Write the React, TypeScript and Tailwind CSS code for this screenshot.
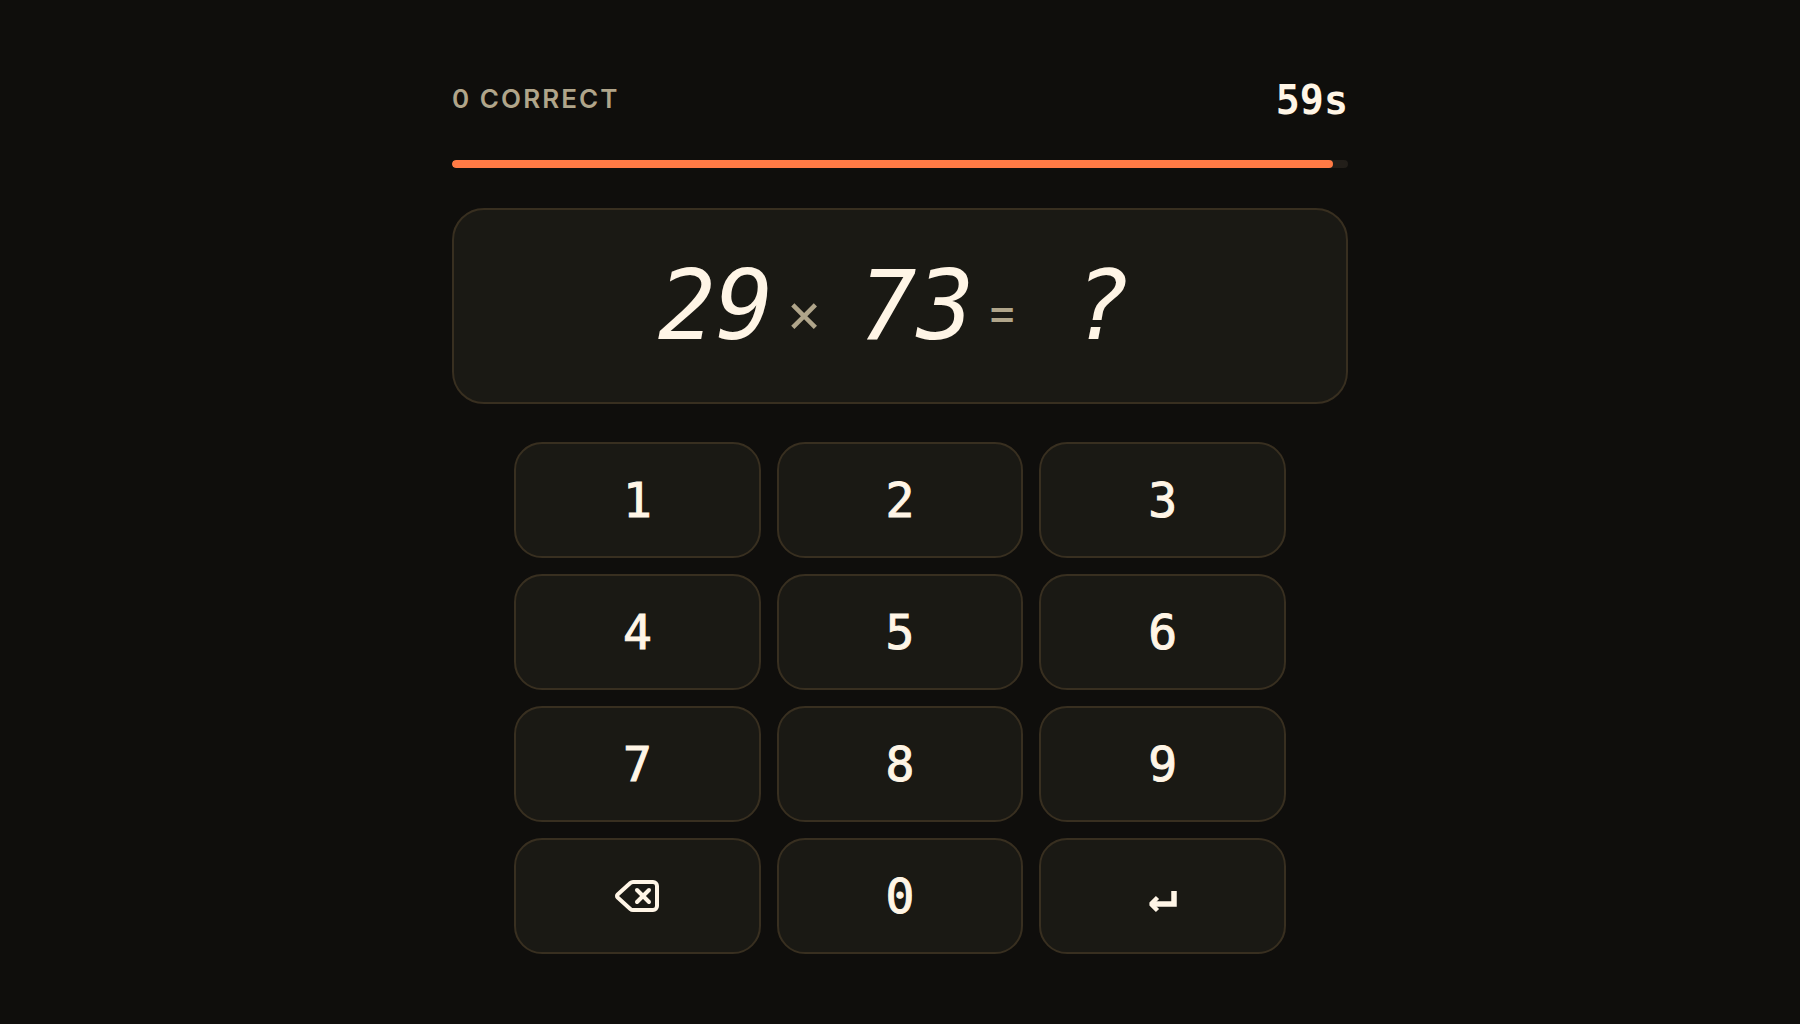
import { Delete } from "lucide-react";

const keys = ["1", "2", "3", "4", "5", "6", "7", "8", "9", "delete", "0", "enter"];

function KeyFace({ name }: { name: string }) {
  if (name === "delete") {
    return <Delete size={48} strokeWidth={2} aria-hidden="true" />;
  }
  if (name === "enter") {
    return (
      <svg width="28" height="48" viewBox="0 0 28 48" fill="none" stroke="currentColor" aria-hidden="true">
        <path d="M25 19V32H3" strokeWidth="5.5" />
        <path d="M8.5 25.5L2 32L8.5 38.5" strokeWidth="4.5" strokeLinejoin="bevel" />
      </svg>
    );
  }
  return <span className="[-webkit-text-stroke:1px]">{name}</span>;
}

export default function App() {
  const total = 60;
  const remaining = 59;

  return (
    <main className="min-h-screen bg-[#0f0e0c] px-8 pt-18 pb-16 font-['Inter',sans-serif] text-[#fff5e6]">
      <div className="mx-auto flex max-w-4xl flex-col">
        <header className="flex h-14 items-center justify-between">
          <p className="pb-1 text-[26px] font-semibold tracking-[0.08em] text-[#b0a58a]">0 CORRECT</p>
          <p className="font-['DejaVu_Sans_Mono',monospace] text-[40px] font-bold">{remaining}s</p>
        </header>

        <div className="mt-8 h-2 overflow-hidden rounded-full bg-[#221e19]">
          <div className="h-full rounded-full bg-[#ff7a45]" style={{ width: `${(remaining / total) * 100}%` }} />
        </div>

        <section
          aria-label="Problem"
          className="mt-10 flex items-center justify-center gap-3 rounded-4xl border-2 border-[#382f20] bg-[#1a1914] py-12 font-['DejaVu_Sans_Mono',monospace] text-8xl italic"
        >
          <span>29</span>
          <span className="mr-6 pt-3 font-['Inter',sans-serif] text-[56px] leading-none not-italic text-[#b0a58a]">×</span>
          <span>73</span>
          <span className="mr-8 pt-3 font-['Inter',sans-serif] text-5xl not-italic text-[#b0a58a]">=</span>
          <span className="min-w-20 text-center">?</span>
        </section>

        <div className="mx-auto mt-[38px] grid w-full max-w-[772px] grid-cols-3 gap-4">
          {keys.map((key) => (
            <button
              key={key}
              type="button"
              aria-label={key}
              className="flex h-29 items-center justify-center rounded-[28px] border-2 border-[#382f20] bg-[#1a1914] font-['DejaVu_Sans_Mono',monospace] text-5xl"
            >
              <KeyFace name={key} />
            </button>
          ))}
        </div>
      </div>
    </main>
  );
}
